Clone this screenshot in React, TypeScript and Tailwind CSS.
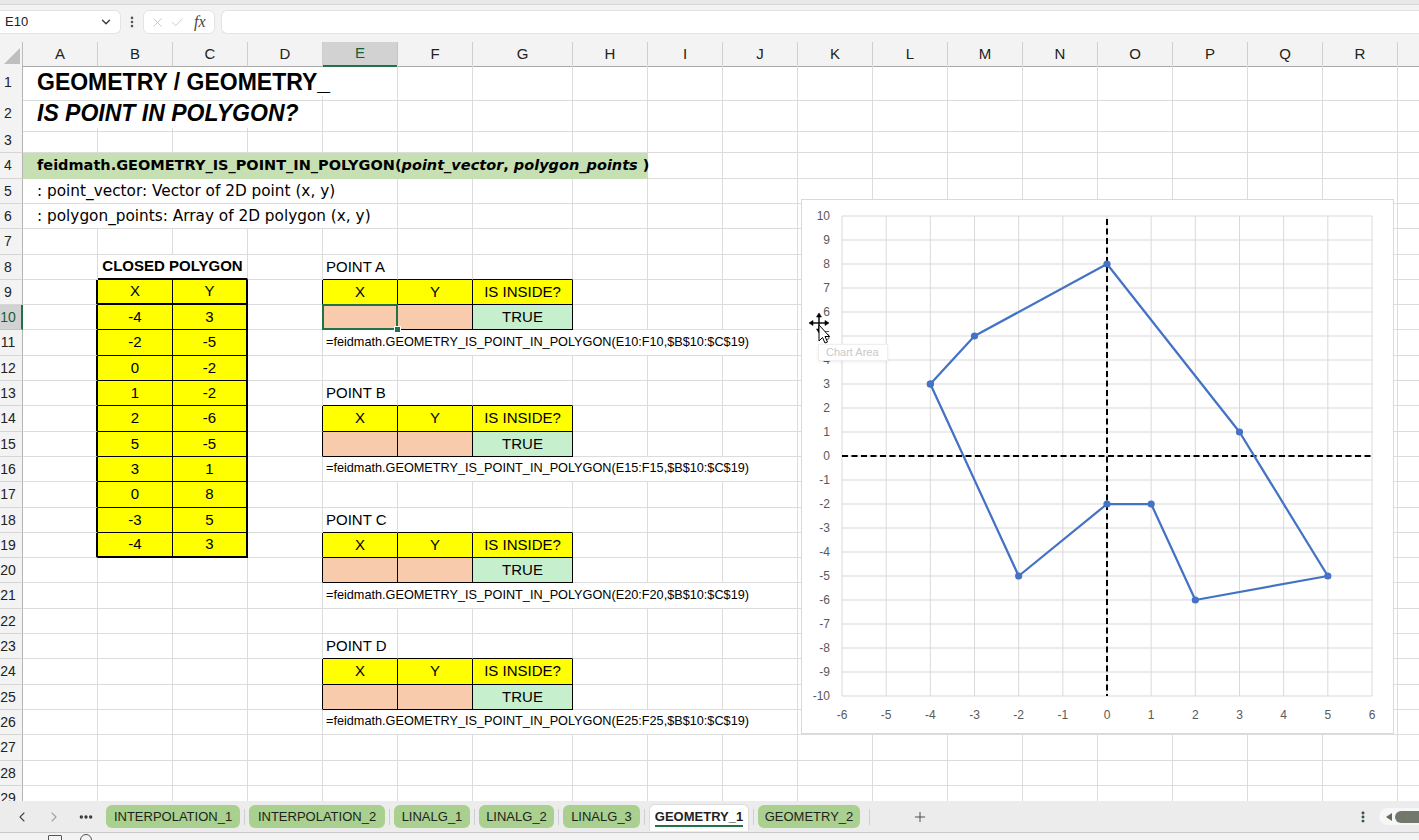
import type { ReactNode } from 'react'
import { ChevronDown, ChevronLeft, ChevronRight, MoreHorizontal, MoreVertical, Plus, X, Check } from 'lucide-react'

const FONT = "font-['Liberation_Sans',Arial,sans-serif]"
const WIDE = "font-['DejaVu_Sans',Verdana,sans-serif]"
const SHEET_COLS = 'grid grid-cols-[23px_repeat(6,75px)_100px_repeat(12,75px)]'
const LETTERS = ['A', 'B', 'C', 'D', 'E', 'F', 'G', 'H', 'I', 'J', 'K', 'L', 'M', 'N', 'O', 'P', 'Q', 'R', 'S']

// cell edges: gridline, thin rule, medium rule
const R_GRID = 'border-r border-r-[#dcdcdc]'
const R_THIN = 'border-r border-r-black'
const R_THICK = 'border-r-2 border-r-black'
const B_GRID = 'border-b border-b-[#dcdcdc]'
const B_THIN = 'border-b border-b-black'
const B_THICK = 'border-b-2 border-b-black'

const SPAN: Record<number, string> = {
  1: 'col-span-1',
  2: 'col-span-2',
  4: 'col-span-4',
  5: 'col-span-5',
  6: 'col-span-6',
  8: 'col-span-8',
}

const YELLOW = 'bg-[#ffff00]'
const PEACH = 'bg-[#f8cbad]'
const GOOD = 'bg-[#c6efce] text-[#006100]'

const POLYGON: [number, number][] = [
  [-4, 3], [-2, -5], [0, -2], [1, -2], [2, -6], [5, -5], [3, 1], [0, 8], [-3, 5], [-4, 3],
]

const POINT_TABLES = [
  { name: 'POINT A', row: 9 },
  { name: 'POINT B', row: 14 },
  { name: 'POINT C', row: 19 },
  { name: 'POINT D', row: 24 },
]

const TABS = [
  { name: 'INTERPOLATION_1', w: 'w-[134px]' },
  { name: 'INTERPOLATION_2', w: 'w-[136px]' },
  { name: 'LINALG_1', w: 'w-[76px]' },
  { name: 'LINALG_2', w: 'w-[75px]' },
  { name: 'LINALG_3', w: 'w-[77px]' },
  { name: 'GEOMETRY_1', w: 'w-[100px]', active: true },
  { name: 'GEOMETRY_2', w: 'w-[102px]' },
]

type Cell = {
  span?: number
  r?: string
  b?: string
  cls?: string
  text?: ReactNode
  skip?: boolean
  selected?: boolean
}

function buildRow(row: number): Cell[] {
  const cells: Cell[] = LETTERS.map(() => ({}))
  const merge = (col: number, span: number, cell: Cell) => {
    cells[col] = { ...cells[col], ...cell, span }
    for (let i = col + 1; i < col + span; i++) cells[i].skip = true
  }

  if (row === 1) merge(0, 5, { cls: 'pl-[14px] text-[23px] font-bold', text: 'GEOMETRY / GEOMETRY_' })
  if (row === 2) merge(0, 4, { cls: 'pl-[14px] text-[23px] font-bold italic', text: 'IS POINT IN POLYGON?' })
  if (row === 4)
    merge(0, 8, {
      cls: `${WIDE} pl-[14px] text-[14.5px] font-bold bg-[#c6e0b4]`,
      r: 'border-r border-r-[#c6e0b4]',
      b: 'border-b border-b-[#c6e0b4]',
      text: (
        <span>
          feidmath.GEOMETRY_IS_POINT_IN_POLYGON(<i>point_vector</i>, <i>polygon_points</i> )
        </span>
      ),
    })
  if (row === 5) merge(0, 5, { cls: `${WIDE} pl-[14px] text-[15.3px]`, text: ': point_vector: Vector of 2D point (x, y)' })
  if (row === 6) merge(0, 5, { cls: `${WIDE} pl-[14px] text-[15.3px]`, text: ': polygon_points: Array of 2D polygon (x, y)' })

  // closed polygon table, B8:C19
  if (row === 8) merge(1, 2, { cls: 'justify-center text-[15px] font-bold', b: B_THICK, text: 'CLOSED POLYGON' })
  if (row >= 9 && row <= 19) {
    const bottom = row === 9 || row === 19 ? B_THICK : B_THIN
    const [x, y] = row === 9 ? ['X', 'Y'] : POLYGON[row - 10].map(String)
    cells[0].r = R_THICK
    cells[1] = { cls: `${YELLOW} justify-center text-[15px]`, r: R_THIN, b: bottom, text: x }
    cells[2] = { cls: `${YELLOW} justify-center text-[15px]`, r: R_THICK, b: bottom, text: y }
  }

  for (const t of POINT_TABLES) {
    if (row === t.row - 1) {
      cells[4] = { cls: 'pl-[3px] text-[15px]', b: B_THIN, text: t.name }
      cells[5].b = B_THIN
      cells[6].b = B_THIN
    }
    if (row === t.row) {
      cells[3].r = R_THIN
      cells[4] = { cls: `${YELLOW} justify-center text-[15px]`, r: R_THIN, b: B_THIN, text: 'X' }
      cells[5] = { cls: `${YELLOW} justify-center text-[15px]`, r: R_THIN, b: B_THIN, text: 'Y' }
      cells[6] = { cls: `${YELLOW} justify-center text-[15px]`, r: R_THIN, b: B_THIN, text: 'IS INSIDE?' }
    }
    if (row === t.row + 1) {
      cells[3].r = R_THIN
      cells[4] = { cls: PEACH, r: R_THIN, b: B_THIN, selected: row === 10 }
      cells[5] = { cls: PEACH, r: R_THIN, b: B_THIN }
      cells[6] = { cls: `${GOOD} justify-center text-[15px]`, r: R_THIN, b: B_THIN, text: 'TRUE' }
    }
    if (row === t.row + 2) {
      const v = t.row + 1
      merge(4, 6, {
        cls: 'pl-[3px] text-[12.7px]',
        text: `=feidmath.GEOMETRY_IS_POINT_IN_POLYGON(E${v}:F${v},$B$10:$C$19)`,
      })
    }
  }
  return cells
}

// rows from 3 on are 25.3px apart, so heights alternate between 25 and 26
function rowStart(row: number) {
  return Math.round(128 + 25.3 * (row - 3))
}

function rowHeight(row: number) {
  if (row === 1) return 'h-[31px]'
  if (row === 2) return 'h-[32px]'
  return rowStart(row + 1) - rowStart(row) === 26 ? 'h-[26px]' : 'h-[25px]'
}

function FormulaBar() {
  return (
    <div className="h-[42px] bg-[#f3f3f3] flex flex-col">
      <div className="h-[5px] bg-[#e8e8e8] border-b border-b-[#d6d6d6]" />
      <div className="flex items-center h-[24px] mt-[5px]">
        <div className="w-[121px] h-full bg-white rounded-r-md border border-l-0 border-[#e3e3e3] flex items-center justify-between pl-[5px] pr-[7px] text-[13px] text-[#222]">
          <span>E10</span>
          <ChevronDown className="w-[14px] h-[14px] text-[#333]" strokeWidth={2.2} />
        </div>
        <div className="w-[22px] flex justify-center text-[#555]">
          <MoreVertical className="w-[14px] h-[14px]" strokeWidth={2.5} />
        </div>
        <div className="w-[72px] h-full bg-white rounded-md border border-[#e3e3e3] flex items-center gap-[5px] pl-[6px]">
          <X className="w-[15px] h-[15px] text-[#c4c4c4]" strokeWidth={1.5} />
          <Check className="w-[15px] h-[15px] text-[#c4c4c4]" strokeWidth={1.5} />
          <span className="ml-[4px] font-['Liberation_Serif',serif] italic text-[16px] text-[#444]">fx</span>
        </div>
        <div className="ml-[6px] flex-1 h-full bg-white rounded-l-md border border-r-0 border-[#e3e3e3]" />
      </div>
    </div>
  )
}

function ColumnHeader() {
  return (
    <div className={`${SHEET_COLS} h-[23px]`}>
      <div className="bg-[#f3f3f3] border-r border-r-[#bdbdbd] border-b border-b-[#a9a9a9] flex items-end justify-end pr-[2px] pb-[2px]">
        <svg width="16" height="16" viewBox="0 0 16 16">
          <polygon points="16,0 16,16 0,16" fill="#bfbfbf" />
        </svg>
      </div>
      {LETTERS.map((l) =>
        l === 'E' ? (
          <div
            key={l}
            className="bg-[#d2d2d2] border-r border-r-[#c4c4c4] border-b-2 border-b-[#217346] flex items-center justify-center text-[15px] text-[#185c37]"
          >
            {l}
          </div>
        ) : (
          <div
            key={l}
            className="bg-[#f3f3f3] border-r border-r-[#cfcfcf] border-b border-b-[#a9a9a9] flex items-center justify-center text-[15px] text-[#222]"
          >
            {l === 'S' ? '' : l}
          </div>
        ),
      )}
    </div>
  )
}

function RowHeader({ row }: { row: number }) {
  const selected = row === 10
  return (
    <div
      className={
        selected
          ? 'bg-[#d2d2d2] border-r-2 border-r-[#217346] border-b border-b-[#c4c4c4] flex items-center text-[14px] text-[#185c37]'
          : 'bg-[#f3f3f3] border-r border-r-[#b4b4b4] border-b border-b-[#d6d6d6] flex items-center text-[14px] text-[#222]'
      }
    >
      <span className="w-[16px] text-center">{row}</span>
    </div>
  )
}

function SheetRow({ row }: { row: number }) {
  const cells = buildRow(row)
  return (
    <div className={`${SHEET_COLS} ${rowHeight(row)}`}>
      <RowHeader row={row} />
      {cells.map((c, i) =>
        c.skip ? null : (
          <div
            key={i}
            className={`flex items-center min-w-0 whitespace-nowrap text-black ${SPAN[c.span ?? 1]} ${c.r ?? R_GRID} ${c.b ?? B_GRID} ${c.cls ?? ''} ${c.selected ? 'relative' : ''}`}
          >
            {c.text}
            {c.selected && (
              <>
                <div className="absolute -left-px -top-px -right-px -bottom-px border-2 border-[#217346]" />
                <div className="absolute -right-[4px] -bottom-[4px] w-[7px] h-[7px] bg-[#217346] border border-white" />
              </>
            )}
          </div>
        ),
      )}
    </div>
  )
}

function Chart() {
  const x0 = 40
  const x1 = 570
  const y0 = 16
  const y1 = 496
  const sx = (x: number) => x0 + ((x + 6) * (x1 - x0)) / 12
  const sy = (y: number) => y0 + ((10 - y) * (y1 - y0)) / 20
  const xs = Array.from({ length: 13 }, (_, i) => i - 6)
  const ys = Array.from({ length: 21 }, (_, i) => 10 - i)
  const path = POLYGON.map(([x, y]) => `${sx(x)},${sy(y)}`).join(' ')

  return (
    <div className="absolute left-[801px] top-[157px] w-[593px] h-[535px] bg-white border border-[#d9d9d9]">
      <svg width="591" height="533" className={FONT}>
        {xs.map((x) => (
          <line key={`vx${x}`} x1={sx(x)} x2={sx(x)} y1={y0} y2={y1} stroke="#d9d9d9" strokeWidth="1" />
        ))}
        {ys.map((y) => (
          <line key={`hy${y}`} x1={x0} x2={x1} y1={sy(y)} y2={sy(y)} stroke="#d9d9d9" strokeWidth="1" />
        ))}
        {ys.map((y) => (
          <text key={`ly${y}`} x={x0 - 12} y={sy(y) + 4} textAnchor="end" fontSize="12" fill="#595959">
            {y}
          </text>
        ))}
        {xs.map((x) => (
          <text key={`lx${x}`} x={sx(x)} y={y1 + 23} textAnchor="middle" fontSize="12" fill="#595959">
            {x}
          </text>
        ))}
        <line x1={sx(0)} x2={sx(0)} y1={y0 + 3} y2={y1} stroke="#000" strokeWidth="2" strokeDasharray="6 3.5" />
        <line x1={x0} x2={x1} y1={sy(0)} y2={sy(0)} stroke="#000" strokeWidth="2" strokeDasharray="6 3.5" />
        <polyline points={path} fill="none" stroke="#4472c4" strokeWidth="2.25" strokeLinejoin="round" />
        {POLYGON.map(([x, y], i) => (
          <circle key={i} cx={sx(x)} cy={sy(y)} r="3.6" fill="#4472c4" />
        ))}
      </svg>
    </div>
  )
}

function MoveCursor() {
  return (
    <svg className="absolute left-[808px] top-[270px]" width="24" height="34" viewBox="0 0 24 34">
      <g stroke="#000" strokeWidth="1.4" fill="#000">
        <line x1="4" y1="11" x2="18" y2="11" />
        <line x1="11" y1="4" x2="11" y2="18" />
        <polygon points="1,11 5,8.5 5,13.5" strokeWidth="0.6" />
        <polygon points="21,11 17,8.5 17,13.5" strokeWidth="0.6" />
        <polygon points="11,1 8.5,5 13.5,5" strokeWidth="0.6" />
        <polygon points="11,21 8.5,17 13.5,17" strokeWidth="0.6" />
      </g>
      <path d="M11 13 L11 29 L14.5 25.5 L17 31 L19.5 30 L17 24.5 L21.5 24.5 Z" fill="#fff" stroke="#000" strokeWidth="1" />
    </svg>
  )
}

function ChartTip() {
  return (
    <div className="absolute left-[818px] top-[302px] w-[70px] h-[17px] bg-white border border-[#efefef] shadow-[0_1px_3px_rgba(0,0,0,0.08)] flex items-center pl-[7px] text-[11px] text-[#c9c9c9]">
      Chart Area
    </div>
  )
}

function SheetTabs() {
  return (
    <div className="h-[32px] bg-[#ececec] border-b border-b-[#c9c9c9] flex items-center">
      <div className="w-[6px]" />
      <div className="w-[32px] flex justify-center text-[#444]">
        <ChevronLeft className="w-[16px] h-[16px]" strokeWidth={1.6} />
      </div>
      <div className="w-[32px] flex justify-center text-[#a0a0a0]">
        <ChevronRight className="w-[16px] h-[16px]" strokeWidth={1.6} />
      </div>
      <div className="w-[32px] flex justify-center text-[#333]">
        <MoreHorizontal className="w-[16px] h-[16px]" strokeWidth={3} />
      </div>
      <div className="w-[4px]" />
      {TABS.map((t, i) => (
        <div key={t.name} className="flex items-center">
          {t.active ? (
            <div className={`${t.w} h-[27px] self-start mt-[1px] bg-white rounded-t-md border border-[#dcdcdc] border-b-0 flex flex-col items-center justify-center`}>
              <span className="text-[13px] font-bold text-[#1f1f1f] leading-[15px] pb-[1px] border-b-2 border-b-[#217346]">
                {t.name}
              </span>
            </div>
          ) : (
            <div className={`${t.w} h-[23px] bg-[#a9d08e] rounded-md flex items-center justify-center text-[13px] text-[#1f1f1f]`}>
              {t.name}
            </div>
          )}
          <div className={i === TABS.length - 1 ? 'w-[10px] flex justify-end' : 'w-[9px] flex justify-center'}>
            <div className="w-px h-[16px] bg-[#cfcfcf]" />
          </div>
        </div>
      ))}
      <div className="w-[42px]" />
      <Plus className="w-[16px] h-[16px] text-[#444]" strokeWidth={1.4} />
      <div className="flex-1" />
      <MoreVertical className="w-[14px] h-[14px] text-[#2f4a3a]" strokeWidth={3} />
      <div className="w-[9px]" />
      <div className="w-[40px] h-[17px] bg-[#f7f7f7] rounded-l-full flex items-center pl-[7px] gap-[3px]">
        <svg width="6" height="8" viewBox="0 0 6 8">
          <polygon points="0,4 6,0 6,8" fill="#5f6a5a" />
        </svg>
        <div className="flex-1 h-[12px] bg-[#72786c] rounded-l-full" />
      </div>
    </div>
  )
}

function StatusBar() {
  return (
    <div className="h-[7px] bg-[#f3f3f3] flex items-start">
      <div className="ml-[48px] mt-[2px] w-[14px] h-[10px] border border-[#555] rounded-[1px]" />
      <div className="ml-[18px] mt-[1px] w-[12px] h-[12px] border border-[#555] rounded-full" />
    </div>
  )
}

export default function App() {
  const rows = Array.from({ length: 29 }, (_, i) => i + 1)
  return (
    <div className={`w-[1419px] h-[840px] overflow-hidden flex flex-col bg-white ${FONT}`}>
      <FormulaBar />
      <div className="relative h-[759px] overflow-hidden bg-white">
        <ColumnHeader />
        {rows.map((r) => (
          <SheetRow key={r} row={r} />
        ))}
        <Chart />
        <MoveCursor />
        <ChartTip />
      </div>
      <SheetTabs />
      <StatusBar />
    </div>
  )
}
